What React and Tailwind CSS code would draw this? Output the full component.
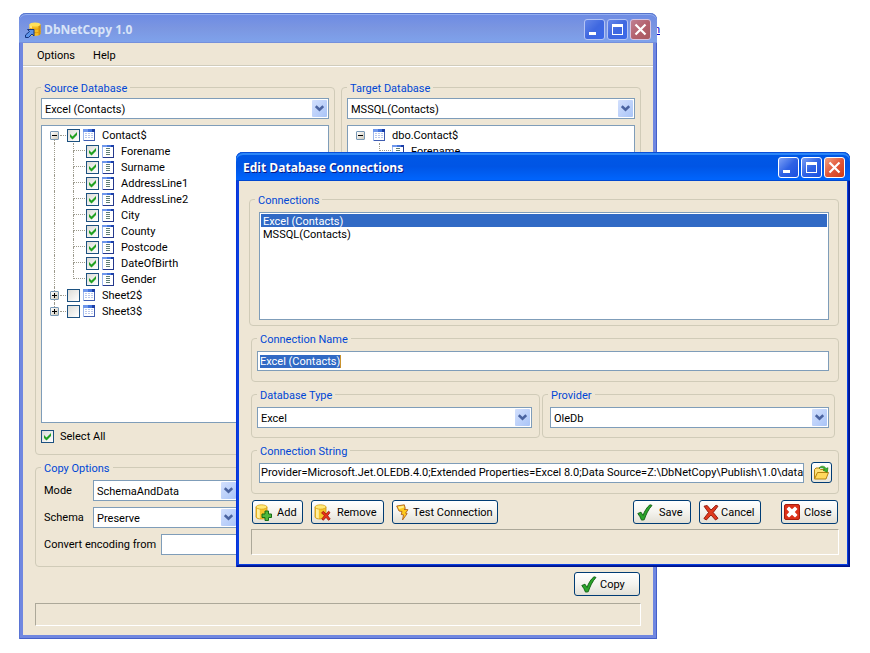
import React from "react";

const FIELDS = ["Forename", "Surname", "AddressLine1", "AddressLine2", "City", "County", "Postcode", "DateOfBirth", "Gender"];

function AppIcon() {
  return (
    <svg width="16" height="16" viewBox="0 0 16 16" aria-hidden="true">
      <path d="M4.500 2.500v9c0 1.600 2.200 2.500 5.500 2.500s5.500-.9 5.500-2.500v-9z" fill="#f5bd22" />
      <path d="M4.500 2.500v9.500c.5.700 1.300 1.200 2.500 1.500V2.500z" fill="#ffe680" />
      <path d="M13.500 3v10.300c1.300-.4 2-1 2-1.800v-9z" fill="#cf8f0e" />
      <ellipse cx="10" cy="2.500" rx="5.500" ry="2.100" fill="#ffe15a" />
      <path d="M4.500 6c1 1.600 10 1.600 11 0M4.500 9.500c1 1.600 10 1.600 11 0" stroke="#d8960f" fill="none" strokeWidth=".9" />
      <path d="M2.500 7.500h6.500v6.500L7 12 3.500 15.500H.5V13L4.500 9.500z" fill="#5b93e8" stroke="#16357e" strokeWidth="1" />
    </svg>
  );
}

function DatabaseShape() {
  return (
    <g>
      <path d="M1 3v9.800c0 1.400 2.200 2.200 5.500 2.200s5.500-.8 5.500-2.200V3z" fill="#f7c52c" stroke="#c98f12" strokeWidth=".8" />
      <path d="M2 4.500v9c.7.500 1.700.8 2.800.9V4.500z" fill="#fff0a0" />
      <ellipse cx="6.500" cy="3" rx="5.500" ry="2.200" fill="#ffe978" stroke="#d9a21b" strokeWidth=".8" />
    </g>
  );
}

function AddIcon() {
  return (
    <svg width="17" height="17" viewBox="0 0 17 17" aria-hidden="true">
      <DatabaseShape />
      <path d="M10 7h3.500v3H16.500v3.500h-3V16.500H10v-3H7V10h3z" fill="#4fb83c" stroke="#176d16" />
    </svg>
  );
}

function RemoveIcon() {
  return (
    <svg width="17" height="17" viewBox="0 0 17 17" aria-hidden="true">
      <DatabaseShape />
      <path d="M7.500 8.800l2-1.500 2.500 2.900 2.500-3 1.500 1.300-2.300 3.200 2.500 3.300-1.700 1.300-2.500-3-2.700 3-1.500-1.400 2.600-3.200z" fill="#e8301c" stroke="#9c1208" strokeWidth=".8" />
    </svg>
  );
}

function BoltIcon() {
  return (
    <svg width="13" height="17" viewBox="0 0 13 17" aria-hidden="true">
      <path d="M.7 2L8.300.8l1 3.700-1.300.9 4 .3L9.500 9.200l1.700.4L6.500 16l1-5.200-2.300-.3L6 7.500 3 7z" fill="#ffcb1c" stroke="#b0601c" strokeWidth=".9" />
      <path d="M2 2.700l5.600-.9.500 1.700-5 1.500z" fill="#fff08c" />
    </svg>
  );
}

function TickIcon() {
  return (
    <svg width="16" height="17" viewBox="0 0 16 17" aria-hidden="true">
      <path d="M.8 9.500L4 8.200l2 3.300C7.500 7.200 10 3 13 .8l2 .6C11.300 5.500 9 10.500 7.200 15.800l-2.700.3C3.500 13.500 2.300 11.300.8 9.500z" fill="#2ba52a" stroke="#0d5c12" strokeWidth=".9" />
    </svg>
  );
}

function CrossIcon() {
  return (
    <svg width="16" height="17" viewBox="0 0 16 17" aria-hidden="true">
      <path d="M1 2.200L4.200 1.500 8 6l5-4.800 2 1L10.200 8.500 15 14.300 12.500 16 8 11 3.300 16 .9 14.500 5.500 8.500z" fill="#e03a1e" stroke="#8c1408" strokeWidth=".9" />
    </svg>
  );
}

function CloseBoxIcon() {
  return (
    <svg width="16" height="16" viewBox="0 0 16 16" aria-hidden="true">
      <rect x=".5" y=".5" width="15" height="15" rx="1.500" fill="#dc3018" stroke="#a81c0c" />
      <path d="M2.500 5L5 2.500l3 2.700 3-2.700L13.500 5l-2.700 3 2.700 3-2.500 2.500-3-2.700-3 2.700L2.500 11l2.700-3z" fill="#fff" />
    </svg>
  );
}

function FolderIcon() {
  return (
    <svg width="17" height="16" viewBox="0 0 17 16" aria-hidden="true">
      <path d="M1.500 13.500V4.500L3 3h3l1.500 1.500h6.500V8" fill="#ffe27a" stroke="#b58310" />
      <path d="M1.500 14L4.500 7.500h11L13 14z" fill="#ffd95c" stroke="#b58310" />
      <path d="M6 3C8 .5 11.500.5 13 3.500l2-.8-.8 4.600L10 5.200l1.600-.8C10.500 2.600 8.500 2.400 6 3z" fill="#42b52e" stroke="#1b7a14" strokeWidth=".6" />
    </svg>
  );
}

function TableIcon() {
  return (
    <svg width="12" height="12" viewBox="0 0 12 12" className="shrink-0" shapeRendering="crispEdges" aria-hidden="true">
      <rect width="12" height="12" fill="#9db8ee" />
      <rect width="12" height="3" fill="#6e97ec" />
      <rect x="5" width="4" height="3" fill="#4273dc" />
      <rect x="9" width="3" height="3" fill="#1c3fa8" />
      <rect x="1" y="3" width="10" height="8" fill="#fff" />
      <path d="M2 4.500h2M5 4.500h2M8 4.500h2M2 6.500h2M5 6.500h2M8 6.500h2M2 8.500h2M5 8.500h2M8 8.500h2" stroke="#b9c8ee" />
      <path d="M11.500 3v9M1 11.500h11" stroke="#3f5cb0" />
    </svg>
  );
}

function ColumnIcon() {
  return (
    <svg width="12" height="13" viewBox="0 0 12 13" className="shrink-0" shapeRendering="crispEdges" aria-hidden="true">
      <rect width="12" height="13" fill="#9db8ee" />
      <rect width="12" height="2" fill="#6e97ec" />
      <rect x="5" width="4" height="2" fill="#4273dc" />
      <rect x="9" width="3" height="2" fill="#1c3fa8" />
      <rect x="1" y="2" width="10" height="10" fill="#fff" />
      <path d="M4 3.500h4M4 5.500h4M4 7.500h4M4 9.500h4" stroke="#5f7f74" />
      <path d="M11.500 2v11M1 12.500h11" stroke="#24388c" />
    </svg>
  );
}

function CheckBox({ id, label, checked }) {
  return (
    <span className="relative block h-[13px] w-[13px] shrink-0">
      <input
        id={id}
        type="checkbox"
        aria-label={label}
        defaultChecked={checked}
        className="peer block h-[13px] w-[13px] appearance-none border border-[#1c5180] bg-linear-to-br from-[#dcdcd7] to-white"
      />
      <svg viewBox="0 0 13 13" className="pointer-events-none absolute inset-0 hidden h-[13px] w-[13px] peer-checked:block" aria-hidden="true">
        <path d="M3 5l2.500 2.500L10 3v3L5.500 10.500 3 8z" fill="#21a121" />
      </svg>
    </span>
  );
}

function Toggle({ open, first, last }) {
  return (
    <span className="flex h-4 w-[9px] shrink-0 flex-col items-center">
      <span className={first ? "w-px flex-1" : "w-px flex-1 border-l border-dotted border-[#9c9a8c]"} />
      <button type="button" aria-label={open ? "Collapse" : "Expand"} className="block h-[9px] w-[9px] rounded-[1px] border border-[#7898b5] bg-linear-to-br from-white to-[#cfcabb]">
        <svg width="7" height="7" viewBox="0 0 7 7" shapeRendering="crispEdges" aria-hidden="true">
          <path d={open ? "M1 3.500h5" : "M1 3.500h5M3.500 1v5"} stroke="#000" />
        </svg>
      </button>
      <span className={last ? "w-px flex-1" : "w-px flex-1 border-l border-dotted border-[#9c9a8c]"} />
    </span>
  );
}

function RootRow({ label, open, first, last, check, checked }) {
  return (
    <div className="flex h-4 items-center pl-2">
      <Toggle open={open} first={first} last={last} />
      {check && <span className="mr-px ml-px w-[6px] border-t border-dotted border-[#9c9a8c]" />}
      {check ? <CheckBox label={label} checked={checked} /> : <span className="w-[5px]" />}
      <span className="flex items-center gap-[7px] pl-[3px]">
        <TableIcon />
        {label}
      </span>
    </div>
  );
}

function ChildRow({ label, last, check, trunk }) {
  return (
    <li className="flex h-4 items-center pl-3">
      <span className={trunk ? "h-4 w-[19px] border-l border-dotted border-[#9c9a8c]" : "h-4 w-[19px]"} />
      <span className="flex h-4 w-[13px] flex-col">
        <span className="h-2 w-3 border-b border-l border-dotted border-[#9c9a8c]" />
        <span className={last ? "h-2" : "h-2 border-l border-dotted border-[#9c9a8c]"} />
      </span>
      {check && <CheckBox label={label} checked />}
      <span className={check ? "flex items-center gap-[7px] pl-[3px]" : "flex items-center gap-[7px]"}>
        <ColumnIcon />
        {label}
      </span>
    </li>
  );
}

function Combo({ id, label, value, className }) {
  return (
    <div className={"relative h-[21px] " + className}>
      <select id={id} aria-label={label} className="h-[21px] w-full appearance-none border border-[#7f9db9] bg-white pt-px pr-5 pl-[3px] text-[11px] leading-[13px]">
        <option>{value}</option>
      </select>
      <span className="pointer-events-none absolute top-[2px] right-[2px] flex h-[17px] w-[15px] items-center justify-center rounded-[1px] bg-linear-to-br from-[#d3e0fd] to-[#a9c4f7]">
        <svg width="9" height="7" viewBox="0 0 9 7" aria-hidden="true">
          <path d="M.8 1.200l3.700 3.500L8.200 1.200" fill="none" stroke="#4a63a0" strokeWidth="2.500" />
        </svg>
      </span>
    </div>
  );
}

function Group({ title, className = "", children }) {
  return (
    <fieldset className={"min-w-0 rounded-[4px] border border-[#d0cbb8] px-[5px] " + className}>
      <legend className="h-[13px] px-[3px] leading-[15px] text-[#0046d5]">{title}</legend>
      {children}
    </fieldset>
  );
}

function PushButton({ icon, children, className }) {
  return (
    <button type="button" className={"flex h-6 items-center rounded-[3px] border border-[#003c74] bg-linear-to-b from-white via-[#f4f3ee] to-[#e3e0d6] whitespace-nowrap " + className}>
      {icon}
      {children}
    </button>
  );
}

function CaptionButtons({ active }) {
  const blue = active
    ? "h-[21px] w-[21px] rounded-[3px] border border-white bg-linear-to-br from-[#7d9ff5] via-[#2f62e4] to-[#1a4fe0]"
    : "h-[21px] w-[21px] rounded-[3px] border border-[#b4c4f4] bg-linear-to-br from-[#6485e8] via-[#3f68e0] to-[#3a68ea]";
  const red = active
    ? "h-[21px] w-[21px] rounded-[3px] border border-white bg-linear-to-br from-[#f0a080] via-[#e2573a] to-[#d03a10]"
    : "h-[21px] w-[21px] rounded-[3px] border border-[#d5c4e0] bg-linear-to-br from-[#c08094] via-[#b4626e] to-[#a8585e]";
  return (
    <div className="flex gap-[2px]">
      <button type="button" aria-label="Minimize" className={blue}>
        <svg width="19" height="19" viewBox="0 0 19 19" aria-hidden="true"><path d="M4 12h7v3H4z" fill="#fff" /></svg>
      </button>
      <button type="button" aria-label="Maximize" className={blue}>
        <svg width="19" height="19" viewBox="0 0 19 19" aria-hidden="true"><path d="M4 4h11v11H4zM5 7v7h9V7z" fill="#fff" fillRule="evenodd" /></svg>
      </button>
      <button type="button" aria-label="Close window" className={red}>
        <svg width="19" height="19" viewBox="0 0 19 19" aria-hidden="true"><path d="M4.500 4.500l10 10M14.500 4.500l-10 10" stroke="#fff" strokeWidth="2.200" /></svg>
      </button>
    </div>
  );
}

function MainWindow() {
  return (
    <section aria-label="DbNetCopy 1.0" className="absolute top-[13px] right-[213px] left-[19px] rounded-t-[7px] bg-[#7087e0] shadow-[inset_1px_0_#5a74d4,inset_-1px_-1px_#4560c8]">
      <header className="flex h-[30px] items-center gap-[3px] rounded-t-[7px] bg-linear-to-b from-[#6c8ae4] via-[#7b96e1] to-[#7fa3ec] pt-[3px] pr-[6px] pl-[6px] shadow-[inset_0_1px_#5674cc,inset_0_2px_#93aef0,inset_0_-1px_#7590dc]">
        <AppIcon />
        <h1 className="flex-1 font-['Open_Sans','Noto_Sans',sans-serif] text-[12px] leading-[18px] font-bold text-[#d8e4f8]">DbNetCopy 1.0</h1>
        <CaptionButtons />
      </header>
      <div className="mx-1 bg-[#eee6d5]">
        <nav className="flex h-6 items-center gap-[18px] border-b border-white pt-[2px] pl-[14px] shadow-[inset_0_-1px_#d0ccbc]">
          <button type="button">Options</button>
          <button type="button">Help</button>
        </nav>
        <div className="px-3 pt-[14px] pb-[9px]">
          <div className="grid grid-cols-2 gap-[6px]">
            <Group title="Source Database" className="pt-1 pb-[11px]">
              <Combo label="Source Database" value="Excel (Contacts)" className="w-full" />
              <div className="mt-[6px] h-[298px] border border-[#7f9db9] bg-white pt-px">
                <RootRow label="Contact$" open first check checked />
                <ul>
                  {FIELDS.map((name, i) => (
                    <ChildRow key={name} label={name} check trunk last={i === FIELDS.length - 1} />
                  ))}
                </ul>
                <RootRow label="Sheet2$" check />
                <RootRow label="Sheet3$" check last />
              </div>
              <div className="mt-[7px] flex h-[13px] items-center gap-[6px]">
                <CheckBox id="select-all" checked />
                <label htmlFor="select-all">Select All</label>
              </div>
            </Group>
            <Group title="Target Database" className="pt-1 pb-[11px]">
              <Combo label="Target Database" value="MSSQL(Contacts)" className="w-full" />
              <div className="mt-[6px] h-[298px] border border-[#7f9db9] bg-white pt-px">
                <RootRow label="dbo.Contact$" open first last />
                <ul>
                  <ChildRow label="Forename" last />
                </ul>
              </div>
            </Group>
          </div>
          <Group title="Copy Options" className="mt-[6px] pt-[6px] pb-[11px]">
            <div className="grid grid-cols-[49px_145px] gap-y-[6px] pl-[3px]">
              <label htmlFor="mode" className="leading-[21px]">Mode</label>
              <Combo id="mode" value="SchemaAndData" className="w-full" />
              <label htmlFor="schema" className="leading-[21px]">Schema</label>
              <Combo id="schema" value="Preserve" className="w-full" />
            </div>
            <div className="mt-[6px] flex pl-[3px]">
              <label htmlFor="encoding" className="w-[117px] leading-[21px]">Convert encoding from</label>
              <input id="encoding" type="text" className="h-[21px] w-[120px] border border-[#7f9db9] bg-white px-[3px]" />
            </div>
          </Group>
          <div className="mt-[5px] flex justify-end pr-px">
            <PushButton icon={<TickIcon />} className="w-[66px] gap-[3px] pl-[6px]">Copy</PushButton>
          </div>
          <div role="status" className="mt-[7px] h-[23px] border border-t-[#aca899] border-r-white border-b-white border-l-[#aca899]" />
        </div>
      </div>
      <div className="h-1" />
    </section>
  );
}

function ConnectionsDialog() {
  return (
    <section role="dialog" aria-label="Edit Database Connections" className="absolute top-[152px] right-5 left-[236px] rounded-t-[7px] bg-[#0a3fe0] shadow-[inset_1px_0_#0831d9,inset_-1px_-1px_#00138c,inset_-2px_-2px_#001ea0]">
      <header className="flex h-[29px] items-center rounded-t-[7px] bg-linear-to-b from-[#0058e6] via-[#0055e5] to-[#0066ff] pt-[2px] pr-[5px] pl-[7px] shadow-[inset_0_1px_#0a4fd8,inset_0_3px_#2b86f8,inset_0_-1px_#0048d0]">
        <h2 className="flex-1 font-['Open_Sans','Noto_Sans',sans-serif] text-[12px] leading-[18px] font-bold text-white [text-shadow:1px_1px_#0a1883]">Edit Database Connections</h2>
        <CaptionButtons active />
      </header>
      <div className="mx-[3px] bg-[#eee6d5] pt-3 pr-2 pb-[9px] pl-[10px]">
        <Group title="Connections" className="pt-[6px] pb-[5px]">
          <ul role="listbox" aria-label="Connections" className="mr-1 ml-1 h-[108px] border border-[#7f9db9] bg-white p-px">
            <li role="option" aria-selected="true" className="h-[13px] bg-[#316ac5] pl-[2px] leading-[15px] text-white">Excel (Contacts)</li>
            <li role="option" aria-selected="false" className="h-[13px] pl-[2px] leading-[15px]">MSSQL(Contacts)</li>
          </ul>
        </Group>
        <div className="pl-[2px]">
          <Group title="Connection Name" className="mt-[6px] pt-[6px] pb-[10px]">
            <div className="mr-1 flex h-5 items-center border border-[#7f9db9] bg-white pl-[2px]">
              <input
                type="text"
                aria-label="Connection Name"
                defaultValue="Excel (Contacts)"
                className="field-sizing-content h-[13px] border-r border-[#c8922e] bg-[#316ac5] leading-[13px] text-white outline-none"
              />
            </div>
          </Group>
          <div className="mt-[6px] mr-1 grid grid-cols-[289fr_293fr] gap-[2px]">
            <Group title="Database Type" className="pt-[6px] pb-[9px]">
              <div className="pr-[2px]">
                <Combo label="Database Type" value="Excel" className="w-full" />
              </div>
            </Group>
            <Group title="Provider" className="pt-[6px] pb-[9px]">
              <div className="pl-[2px]">
                <Combo label="Provider" value="OleDb" className="w-full" />
              </div>
            </Group>
          </div>
          <Group title="Connection String" className="mt-[6px] pt-[5px] pb-[10px]">
            <div className="flex items-center gap-[7px] pr-px pl-[2px]">
              <input
                type="text"
                aria-label="Connection String"
                defaultValue="Provider=Microsoft.Jet.OLEDB.4.0;Extended Properties=Excel 8.0;Data Source=Z:\DbNetCopy\Publish\1.0\data\"
                className="h-5 min-w-0 flex-1 border border-[#7f9db9] bg-white pl-px"
              />
              <button type="button" aria-label="Browse" className="flex h-[21px] w-[21px] items-center justify-center rounded-[3px] border border-[#003c74] bg-linear-to-b from-white to-[#e8e5da]">
                <FolderIcon />
              </button>
            </div>
          </Group>
          <div className="mt-[6px] flex gap-2 pr-px pl-px">
            <PushButton icon={<AddIcon />} className="w-[51px] gap-[5px] pl-[2px]">Add</PushButton>
            <PushButton icon={<RemoveIcon />} className="w-[73px] gap-[6px] pl-[2px]">Remove</PushButton>
            <PushButton icon={<BoltIcon />} className="w-[106px] gap-1 pl-[3px]">Test Connection</PushButton>
            <PushButton icon={<TickIcon />} className="ml-auto w-[58px] gap-[6px] pl-[3px]">Save</PushButton>
            <PushButton icon={<CrossIcon />} className="w-[62px] gap-[2px] pl-[3px]">Cancel</PushButton>
            <PushButton icon={<CloseBoxIcon />} className="ml-3 w-[57px] gap-1 pl-[2px]">Close</PushButton>
          </div>
          <div role="status" className="mt-[5px] h-[26px] border border-t-[#aca899] border-r-white border-b-white border-l-[#aca899]" />
        </div>
      </div>
      <div className="h-[3px]" />
    </section>
  );
}

export default function App() {
  return (
    <main className="relative min-h-screen overflow-hidden bg-white font-[Roboto,'Liberation_Sans',Arial,sans-serif] text-[11px] leading-[13px] text-black">
      <a href="#" className="absolute top-[23px] right-[210px] text-[#0000cc] underline">n</a>
      <MainWindow />
      <ConnectionsDialog />
    </main>
  );
}
